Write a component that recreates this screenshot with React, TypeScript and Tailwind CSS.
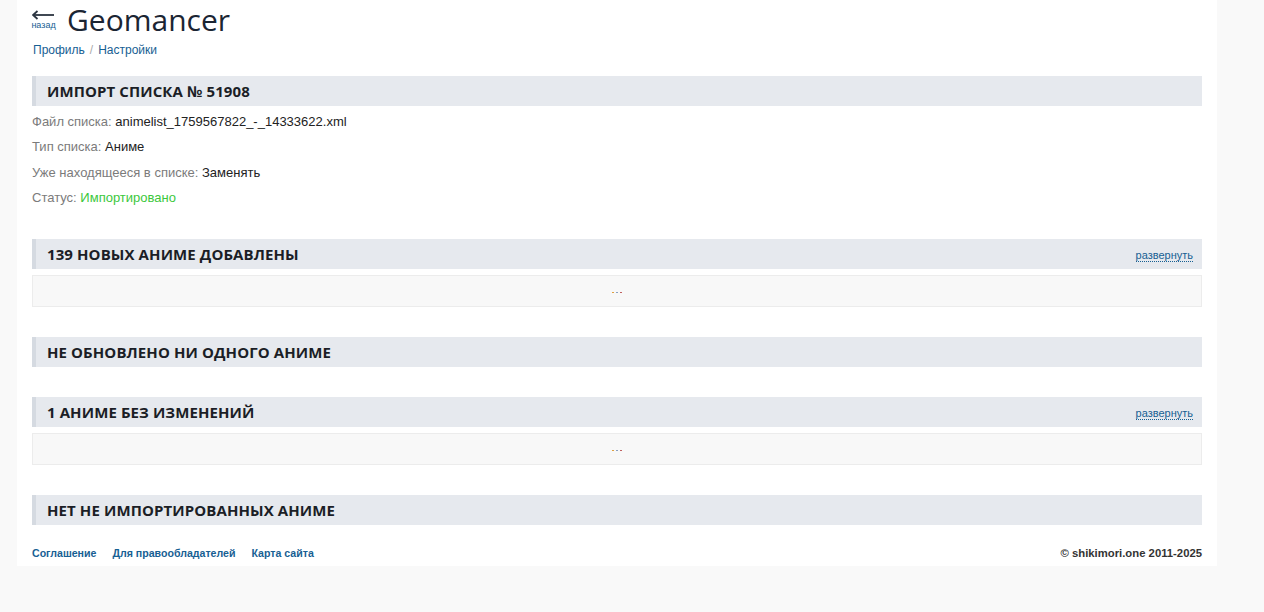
import type { FC, ReactNode } from 'react';

const SectionHead: FC<{ title: string; expand?: boolean }> = ({ title, expand }) => (
  <div className="flex h-[30px] items-center justify-between border-l-4 border-[#d5dae1] bg-[#e6e9ee] pl-[11px] pr-[9px]">
    <h2 className="font-['Open_Sans',sans-serif] text-[15px] font-bold uppercase tracking-[0.1px] text-[#1b1e26]">
      {title}
    </h2>
    {expand && (
      <span className="mt-[4px] border-b border-dotted border-[#176093] font-['Liberation_Sans',Arial,sans-serif] text-[11px] leading-[12px] text-[#176093]">
        развернуть
      </span>
    )}
  </div>
);

const Dots: FC = () => (
  <div className="mt-[6px] flex h-[32px] items-center justify-center border border-[#ececec] bg-[#f8f8f8]">
    <div className="mt-[3px] flex gap-[2px]">
      <span className="h-[1px] w-[2px] bg-[#e0a040]" />
      <span className="h-[1px] w-[2px] bg-[#8aa0c0]" />
      <span className="h-[1px] w-[2px] bg-[#c06060]" />
    </div>
  </div>
);

const Row: FC<{ label: string; children: ReactNode }> = ({ label, children }) => (
  <div className="h-[25.3px] leading-[16px]">
    <span className="text-[#7b7b7b]">{label}: </span>
    {children}
  </div>
);

export default function App() {
  return (
    <div className="min-h-[612px] bg-[#f9f9f9] font-['Liberation_Sans',Arial,sans-serif]">
      <div className="mx-auto w-[1200px] -translate-x-[15px] bg-white px-[15px] pb-[5px]">
        <header className="flex items-start gap-[12px] pt-[4px]">
          <div className="flex w-[23px] flex-col items-center pt-[6px] text-[#176093]">
            <svg width="23" height="10" viewBox="0 0 23 10">
              <path d="M1 5 H22" stroke="#2b3440" strokeWidth="1.8" />
              <path d="M5.5 1 L1 5 L5.5 9" stroke="#2b3440" strokeWidth="1.8" fill="none" />
            </svg>
            <span className="mt-[1px] text-[9px] leading-[9px]">назад</span>
          </div>
          <h1 className="font-['Open_Sans',sans-serif] text-[30px] leading-[32px] text-[#1b2533]">Geomancer</h1>
        </header>
        <nav className="mt-[5px] flex gap-[5px] pl-[1px] text-[12px] text-[#176093]">
          <span>Профиль</span>
          <span className="text-[#aaa]">/</span>
          <span>Настройки</span>
        </nav>

        <section className="mt-[17px]">
          <SectionHead title="Импорт списка № 51908" />
          <div className="mt-[8px] text-[13px] text-[#222]">
            <Row label="Файл списка">animelist_1759567822_-_14333622.xml</Row>
            <Row label="Тип списка">Аниме</Row>
            <Row label="Уже находящееся в списке">Заменять</Row>
            <Row label="Статус">
              <span className="text-[#3cc83c]">Импортировано</span>
            </Row>
          </div>
        </section>

        <section className="mt-[23.8px]">
          <SectionHead title="139 новых аниме добавлены" expand />
          <Dots />
        </section>

        <section className="mt-[30px]">
          <SectionHead title="Не обновлено ни одного аниме" />
        </section>

        <section className="mt-[30px]">
          <SectionHead title="1 аниме без изменений" expand />
          <Dots />
        </section>

        <section className="mt-[30px]">
          <SectionHead title="Нет не импортированных аниме" />
        </section>

        <footer className="mt-[20px] flex items-center justify-between text-[10.6px] font-bold leading-[16px] text-[#176093]">
          <div className="flex gap-[16px]">
            <span>Соглашение</span>
            <span>Для правообладателей</span>
            <span>Карта сайта</span>
          </div>
          <span className="text-[11.3px] text-[#333]">© shikimori.one 2011-2025</span>
        </footer>
      </div>
    </div>
  );
}
